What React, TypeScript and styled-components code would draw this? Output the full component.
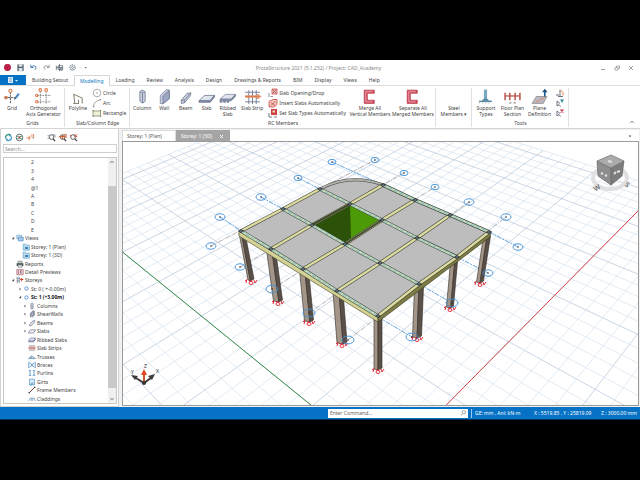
import React from "react";
import styled, { createGlobalStyle } from "styled-components";

const Global = createGlobalStyle`
  * { box-sizing: border-box; }
  html, body { margin: 0; background: #000; }
  body, button, input { font-family: "Noto Sans", "Open Sans", sans-serif; font-size: 5px; line-height: 6px; color: #444; }
  button { border: 0; margin: 0; padding: 0; background: none; cursor: pointer; }
  ul { list-style: none; margin: 0; padding: 0; }
  svg { display: block; flex: none; }
`;

/* ---------- shell ---------- */
const Page = styled.div`
  min-height: 100vh;
  padding: 60px 0 61px;
  display: flex;
  background: #000;
`;
const Screen = styled.div`
  flex: 1;
  min-width: 0;
  display: flex;
  flex-direction: column;
  background: #fff;
`;
const TitleBar = styled.header`
  display: grid;
  grid-template-columns: 1fr auto 1fr;
  align-items: center;
  height: 15px;
  padding: 0 4px 0 1px;
`;
const QuickBar = styled.div`
  display: flex;
  align-items: center;
`;
const QuickButton = styled.button`
  width: 13px;
  height: 12px;
  display: grid;
  place-items: center;
`;
const Title = styled.h1`
  margin: 0;
  font-size: 5px;
  font-weight: 400;
  color: #8a8a8a;
  white-space: pre;
`;
const WindowButtons = styled.div`
  display: flex;
  justify-content: flex-end;
  gap: 4px;
`;
const WindowButton = styled.button`
  width: 10px;
  height: 10px;
  display: grid;
  place-items: center;
`;

/* ---------- ribbon ---------- */
const TabRow = styled.nav`
  display: flex;
  height: 11px;
  border-bottom: 1px solid #dcdcdc;
`;
const FileTab = styled.button`
  width: 26px;
  height: 10px;
  background: #0572c6;
  display: grid;
  place-items: center;
`;
const RibbonTab = styled.button<{ $active?: boolean }>`
  height: ${(p) => (p.$active ? 11 : 10)}px;
  padding: 0 ${(p) => (p.$active ? 5 : 6)}px;
  border: ${(p) => (p.$active ? "1px solid #d6d6d6" : "0")};
  border-bottom: 0;
  background: #fff;
  color: ${(p) => (p.$active ? "#0a78c0" : "#444")};
  white-space: nowrap;
`;
const Ribbon = styled.div`
  display: flex;
  height: 43px;
  border-bottom: 1px solid #d4d4d4;
`;
const Group = styled.section`
  display: flex;
  flex-direction: column;
  justify-content: space-between;
  margin: 2px 0 1px;
  border-right: 1px solid #e0e0e0;
  padding-left: 1px;
`;
const GroupBody = styled.div`
  display: flex;
`;
const GroupLabel = styled.h2`
  margin: 0;
  font-size: 5px;
  font-weight: 400;
  line-height: 7px;
  height: 7px;
  text-align: center;
`;
const Tool = styled.button<{ $width: number }>`
  width: ${(p) => p.$width}px;
  display: flex;
  flex-direction: column;
  align-items: center;
  text-align: center;
  white-space: pre;
`;
const ToolList = styled.div`
  display: flex;
  flex-direction: column;
  padding-left: 2px;
`;
const SmallTool = styled.button`
  display: flex;
  align-items: center;
  gap: 1px;
  height: 10px;
  padding-right: 3px;
  white-space: nowrap;
`;
const RibbonEnd = styled.div`
  flex: 1;
  display: flex;
  justify-content: flex-end;
  align-items: flex-end;
  padding: 2px 4px;
`;

/* ---------- workspace ---------- */
const Workspace = styled.main`
  flex: 1;
  min-height: 0;
  display: flex;
  background: #f1f1f1;
`;
const SidePanel = styled.aside`
  width: 119px;
  display: flex;
  flex-direction: column;
  border: 1px solid #d2d2d2;
  border-top: 0;
  padding: 1px 1px 2px 2px;
  background: #fff;
`;
const PanelTools = styled.div`
  display: flex;
  height: 14px;
  align-items: center;
`;
const PanelButton = styled.button<{ $gap?: boolean }>`
  width: 11px;
  height: 11px;
  margin-left: ${(p) => (p.$gap ? 10 : 0)}px;
  display: grid;
  place-items: center;
`;
const TreeSearch = styled.input`
  width: 100%;
  height: 9px;
  border: 1px solid #cfcfcf;
  padding: 0 1px;
  margin-bottom: 4px;
  &::placeholder { color: #8c8c8c; }
`;
const TreeBox = styled.div`
  flex: 1;
  display: flex;
  border: 1px solid #c8c8c8;
`;
const Tree = styled.ul`
  flex: 1;
  display: grid;
  grid-auto-rows: 1fr;
`;
const TreeRow = styled.li<{ $pad: number; $bold?: boolean }>`
  display: flex;
  align-items: center;
  gap: 1px;
  min-height: 8px;
  padding-left: ${(p) => p.$pad}px;
  font-weight: ${(p) => (p.$bold ? 700 : 400)};
  color: ${(p) => (p.$bold ? "#111" : "#444")};
  white-space: nowrap;
`;
const Expander = styled.button`
  width: 5px;
  height: 6px;
  display: grid;
  place-items: center;
`;
const ScrollBar = styled.div`
  width: 8px;
  display: grid;
  grid-template-rows: 8px 20fr 201fr 15px;
  justify-items: center;
  background: #f0f0f0;
`;
const ScrollThumb = styled.div`
  grid-row: 3;
  width: 100%;
  background: #c9c9c9;
`;
const ScrollArrow = styled.button<{ $end?: boolean }>`
  grid-row: ${(p) => (p.$end ? 4 : 1)};
  align-self: ${(p) => (p.$end ? "end" : "center")};
  height: 8px;
  display: grid;
  place-items: center;
`;
const DocArea = styled.div`
  flex: 1;
  min-width: 0;
  display: flex;
  flex-direction: column;
  padding: 1px 1px 1px 3px;
`;
const DocTabs = styled.div`
  display: flex;
  height: 11px;
  padding-right: 6px;
  background: #fff;
`;
const DocTab = styled.button<{ $active?: boolean }>`
  width: 54px;
  padding: 0 4px;
  display: flex;
  align-items: center;
  justify-content: space-between;
  border: 1px solid ${(p) => (p.$active ? "#a5a5a5" : "#dadada")};
  border-bottom: 0;
  background: ${(p) => (p.$active ? "#a5a5a5" : "#fff")};
  color: ${(p) => (p.$active ? "#fff" : "#555")};
`;
const DocMenu = styled.button`
  margin-left: auto;
`;
const Viewport = styled.div`
  flex: 1;
  min-height: 0;
  display: grid;
  border: 1px solid #9a9a9a;
  background: #fff;
  svg { width: 100%; height: 100%; min-height: 0; }
`;
const StatusBar = styled.footer`
  height: 13px;
  display: flex;
  align-items: center;
  justify-content: flex-end;
  padding-right: 3px;
  background: #0572c6;
  color: #fff;
  border-bottom: 1px solid #07375e;
  white-space: pre;
`;
const Command = styled.label`
  display: flex;
  align-items: center;
  width: 22%;
  height: 9px;
  padding-right: 1px;
  background: #fff;
  margin-right: 3px;
`;
const CommandInput = styled.input`
  flex: 1;
  min-width: 0;
  height: 9px;
  border: 0;
  padding: 0 2px;
  background: none;
  &::placeholder { color: #666; }
`;
const StatusText = styled.span<{ $width: number }>`
  width: ${(p) => p.$width}px;
  padding-left: 3px;
`;
const StatusFirst = styled(StatusText)`
  border-left: 1px solid #9cc8ea;
  line-height: 9px;
`;

/* ---------- icons ---------- */
const RED = "#d2464a";
const ORANGE = "#e07a4a";
const GRAY = "#6b7280";
const STEEL = "#c9cfe0";

const art: Record<string, React.ReactNode> = {
  grid: (
    <g fill="none">
      <path d="M6 4v11M1 9h10" stroke="#555" strokeWidth=".9" strokeDasharray="2 .7" />
      <circle cx="6" cy="2.600" r="1.500" stroke={ORANGE} /><circle cx="1.900" cy="9" r="1.300" stroke={ORANGE} />
      <path d="M10 9l3.200-4.400 1.600 1.200L12 9.600z" fill="#4b8bc4" /><path d="M9.400 11l.7-2 1.800.8z" fill="#355" />
    </g>
  ),
  ortho: (
    <g fill="none">
      <path d="M5 3v12M10.500 3v12M2 7h13M2 13h13" stroke="#777" strokeWidth=".8" strokeDasharray="1.600 .9" />
      <g stroke={ORANGE}><circle cx="5" cy="1.900" r="1.300" /><circle cx="10.500" cy="1.900" r="1.300" /><circle cx="1.700" cy="7" r="1.200" /><circle cx="1.700" cy="13" r="1.200" /></g>
    </g>
  ),
  polyline: <path d="M4.500 14.500L3.500 6l8 3.500v5M3 14.500h5V11" fill="none" stroke="#8b8877" strokeWidth="1" />,
  column: <g stroke="#68718a" strokeWidth=".7"><path d="M5.500 3.500q2-3 5 0v9q-2 3-5 0z" fill={STEEL} /><path d="M8 4v10" fill="none" /><path d="M5.500 3.500q2 1.500 5 0" fill="#eef" /></g>,
  wall: <g stroke="#68718a" strokeWidth=".6"><path d="M4 7l6-5.500 2.500.6v8L6.500 15 4 14.500z" fill={STEEL} /><path d="M6.500 7.500L12.500 2v8L6.500 15z" fill="#9ba6c2" /></g>,
  beam: <g stroke="#68718a" strokeWidth=".7"><path d="M4 11.500L9.500 5l3.500-.5-.5 3L7 14l-3 .5z" fill={STEEL} /><path d="M7 11.500L12.500 5M4 11.500h3V14" fill="none" /></g>,
  slab: <g stroke="#68718a" strokeWidth=".7"><path d="M1 12l5-5h9.500l-4 5z" fill="#dfe3ef" /><path d="M1 12v1.500h10.500L15.500 8.500V7l-4 5z" fill="#8791ad" /></g>,
  ribbed: <g stroke="#68718a" strokeWidth=".6"><path d="M1 10.500L6 6h9.500l-4 4.500z" fill="#dfe3ef" /><path d="M1 10.500v3h1.800v-1.500h1.500v1.500h1.800v-1.500h1.500v1.500h1.800v-1.500H11.500L15.500 8V6l-4 4.500z" fill="#8791ad" /></g>,
  strip: <g fill="none"><path d="M1 4h14M1 13h14M4.500 2v13M8 2v13M11.500 2v13" stroke="#777f99" strokeWidth=".9" /><path d="M1 8h13" stroke={ORANGE} strokeWidth="2" /><path d="M12.500 5.800L15.500 8l-3 2.200" stroke={ORANGE} /></g>,
  merge: <g><path d="M3 2h9.500v3H6v6.500h6.500v3H3z" fill="#d14a5c" stroke="#b33245" strokeWidth=".6" /><path d="M11 3.500H4.500v9.500H11" fill="none" stroke="#f4cdd2" strokeWidth=".6" /></g>,
  blank: null,
  support: <g><path d="M6.500 1.500h3v9h-3z" fill="#76a9c4" /><path d="M4.500 12l2-2h3l2 2z" fill="#4c7f9d" /><path d="M2 12.500h12" stroke="#4c7f9d" strokeWidth="1.200" /><path d="M2 14.500l1-1.500M5 14.500l1-1.500M8 14.500l1-1.500M11 14.500l1-1.500" stroke="#7a8b95" strokeWidth=".6" /></g>,
  floor: <g fill="none" stroke="#b5483c"><path d="M1 4.500v7M5.500 4.500v7M10.500 4.500v7M15 4.500v7" strokeWidth="1.300" /><path d="M1 7.500h14" strokeWidth="1.100" /><path d="M5 14h2M9 14h2" stroke="#888" /></g>,
  plane: <g><path d="M1 14.500L5 8h10l-3.500 6.500z" fill="#bdb9c4" stroke="#777" strokeWidth=".6" /><path d="M4 14l10-6" stroke={ORANGE} strokeWidth=".6" /><path d="M13 8V3" stroke="#174f86" strokeWidth="1.400" /><path d="M10.400 4L13 .8 15.600 4z" fill="#174f86" /></g>,
  /* ten-unit icons */
  circle: <g fill="none"><circle cx="5" cy="5" r="3.800" stroke="#999" strokeWidth=".8" /><circle cx="5" cy="5" r=".7" fill="#888" /></g>,
  arc: <g fill="none"><path d="M1.500 8.500Q2 2.500 8.500 2" stroke="#a09c88" strokeWidth=".9" /><path d="M.8 8.800h1.500M8 1.500h1" stroke="#777" /></g>,
  rect: <g><path d="M1 3h7.500v5H1z" fill="#eef0d8" stroke="#96957e" strokeWidth=".9" /><path d="M.5 2.500h1.200M.5 8.300h1.200M8 2.500h1.200M8 8.300h1.200" stroke="#6d7a55" /></g>,
  opening: <g fill="none"><path d="M4 1h5v5H4z" fill="#f0c9c4" stroke={RED} strokeWidth=".8" /><path d="M4.500 1.500l4 4m0-4l-4 4" stroke="#8c3c3c" strokeWidth=".7" /><path d="M1 5v4M2.500 8.500H5" stroke="#778" strokeWidth=".8" /></g>,
  insert: <g><path d="M1 3.500L5 1.500h4v5L6 9H1z" fill="#f3c8bd" stroke={RED} strokeWidth=".8" /><path d="M3 7.500L7.500 3M3 4.500l4 3" stroke="#b44" strokeWidth=".8" /></g>,
  types: <g><path d="M3 1h6v6H3z" fill="#cf3f3f" /><path d="M4.500 2.500h2.500v2H4.500z" fill="#f6d1c6" /><path d="M1 5v4h3M6 9h3" fill="none" stroke="#667" strokeWidth=".9" /></g>,
  t1: <g fill="none"><path d="M1 7h3M5 8V2M3 8.500h5" stroke={GRAY} /><path d="M5 1.500l3 3v3" stroke={ORANGE} /></g>,
  t2: <g fill="none"><path d="M2 3v5l2-1.500 1.500 2M2 3l3 2.500" stroke={GRAY} /><path d="M5 1.500h4L7.200 4.500V6L6.500 4z" fill="#2f8f9f" /></g>,
  t3: <g fill="none"><path d="M2 3v5l2-1.500 1.500 2M2 3l3 2.500" stroke={GRAY} /><path d="M5.500 1.500l3 3m0-3l-3 3" stroke="#c22f4b" strokeWidth="1.200" /></g>,
  logo: <g><circle cx="5" cy="5" r="3.800" fill="#b5123c" /><circle cx="5" cy="5" r="2" fill="none" stroke="#e67b95" strokeWidth=".6" strokeDasharray="1 .6" /></g>,
  save: <g><path d="M1.500 1.500h7v7.500h-7z" fill="#53616f" /><path d="M3 1.500h4v2.500H3z" fill="#e8edf1" /><path d="M3 5.500h4.200V9H3z" fill="#d8e0e6" /></g>,
  undo: <path d="M2 2v3h3M2.200 4.800Q5 1.500 7.500 4q1 2-1 3.500" fill="none" stroke="#3c76aa" />,
  redo: <path d="M8 2v3H5M7.800 4.800Q5 1.500 2.500 4q-1 2 1 3.500" fill="none" stroke="#8a949c" />,
  fit: <g fill="none" stroke="#66717c"><path d="M3.500 3h5v4h-5zM1.500 3v5M5 1v8M1.500 5h7" strokeWidth=".9" /><circle cx="7" cy="7" r="1.300" /></g>,
  gear: <g fill="none" stroke="#7f8c98"><circle cx="5" cy="5" r="2.900" strokeWidth="1.300" strokeDasharray="1.500 .6" /><circle cx="5" cy="5" r="1" /></g>,
  more: <path d="M4 4.500h2.400L5.200 6z" fill="#666" />,
  refresh: <g fill="none" strokeWidth="1.400"><path d="M1.800 5.500A3.200 3.200 0 0 1 7.500 3" stroke="#2f9a8a" /><path d="M8.200 4.500A3.200 3.200 0 0 1 2.500 7" stroke="#3aa0cf" /><path d="M6.500 1v2.700h2.200M3.500 9V6.400H1.300" stroke="#2c8ab0" strokeWidth=".8" /></g>,
  globe: <g fill="none"><circle cx="5" cy="5" r="3.700" stroke="#56646a" strokeWidth="1" /><path d="M1.500 3.800h7M1.500 6.300h7" stroke="#3b8f6b" strokeWidth=".8" /><path d="M3.800 4h2.500v2H3.800z" fill="#c65b4a" /></g>,
  axes: <g fill="none"><path d="M.5 5.500h5M3.500 3v5M6.500 1.500v3M8.500 1v4" stroke={ORANGE} /><path d="M7 5.500h2" stroke="#777" /></g>,
  find: <g fill="none"><circle cx="5" cy="4.500" r="2.600" stroke="#555" /><path d="M6.800 6.500L9 9" stroke="#333" strokeWidth="1.300" /><path d="M.5 3h3M.5 6h2M6 2h3v3" stroke="#789" strokeWidth=".8" /></g>,
  findUp: <g fill="none"><circle cx="5" cy="4.500" r="2.600" stroke="#555" /><path d="M6.800 6.500L9 9" stroke="#333" strokeWidth="1.300" /><path d="M5 2v5M1 4h7M7 1.500h2v4" stroke="#d4562d" strokeWidth="1.100" /></g>,
  findX: <g fill="none"><circle cx="4.500" cy="4.500" r="2.600" stroke="#555" /><path d="M6.500 6.500L9 9" stroke="#333" strokeWidth="1.300" /><path d="M6 1.500l3 3m0-3l-3 3M1 3h2" stroke="#cf3f35" /></g>,
  views: <g><path d="M1 1.500h6v4.500H1z" fill="#cfe4f5" stroke="#5d9ccb" strokeWidth=".8" /><path d="M3 4h6v4.500H3z" fill="#a9cdea" stroke="#3f83b8" strokeWidth=".8" /></g>,
  folder: <g><path d="M1.500 1.500h3l.8 1.200h4V9H1.500z" fill="#b9d9ee" stroke="#5fa0cc" strokeWidth=".8" /><path d="M4 5h3.500v2.500H4z" fill="#3f7da8" /></g>,
  printer: <g><path d="M2.500 1.500h5V4h-5z" fill="#e9ecea" stroke="#556" strokeWidth=".7" /><path d="M.8 4h8.400v3.500H.8z" fill="#4c5a55" /><path d="M2.500 6h5v3h-5z" fill="#dfe7e2" stroke="#556" strokeWidth=".6" /></g>,
  detail: <g><path d="M1 2h8v6.500H1z" fill="#f0dfe2" stroke="#9b5560" strokeWidth=".8" /><path d="M3 3v4.500M5 3l2 4M7 3L5 7" stroke="#8d4450" strokeWidth=".8" /></g>,
  storeys: <g fill="none"><path d="M1.500 1v8M4 1v8M1 3h4M1 6h4" stroke="#6d7688" strokeWidth=".9" /><path d="M7 2.500v4M5 4.500h4.200" stroke="#d4472f" strokeWidth="1.300" /></g>,
  dot: <circle cx="5" cy="5" r="2.400" fill="#fff" stroke="#4a86d2" strokeWidth="1.200" />,
  cColumn: <path d="M3.500 2q1.500-1.500 3 0v6q-1.500 1.500-3 0zM5 3v6" fill="#dde0e8" stroke="#7a8296" strokeWidth=".8" />,
  cWall: <path d="M3 4l3.500-3v5L3 9zM5 9l3-2.500v-5L6.500 1" fill="#9aa1b5" stroke="#6c7388" strokeWidth=".8" />,
  cBeam: <path d="M2 7l4.500-5h2L8 4 4 8.500H2z" fill="#e1e4ec" stroke="#737a8f" strokeWidth=".9" />,
  cSlab: <path d="M.5 7.500l2.500-4h6.500l-2.500 4z" fill="#eff0f5" stroke="#737a8f" strokeWidth=".9" />,
  cRibbed: <g><path d="M.5 6l2.500-3.500h6.500L7 6z" fill="#dfe1f0" stroke="#6b6f9e" strokeWidth=".8" /><path d="M.5 7.200H7l2.500-3.500" fill="none" stroke="#6b6f9e" strokeWidth="1.200" /></g>,
  cStrip: <g fill="none"><path d="M2.500 1v8M5 1v8M7.500 1v8M1 2.500h8M1 7.500h8" stroke="#9a8b90" strokeWidth=".7" /><path d="M.5 5h9" stroke="#cf4a45" strokeWidth="1.300" /></g>,
  cTruss: <path d="M.5 7l4-3.500L9.500 7zM3 7V5M4.500 7V4M6.500 7V5" fill="none" stroke="#5b8fb8" strokeWidth=".9" />,
  cBrace: <path d="M1 1v8M9 1v8M2.500 2l5 6M7.500 2l-5 6" fill="none" stroke="#3f83c4" />,
  cPurlin: <path d="M1 2h3M2.500 2v6M1 8h3M6 2h3M7.500 2v6M6 8h3" fill="none" stroke="#3f83c4" strokeWidth=".9" />,
  cGirt: <path d="M2 1.500h6v7H2zM2 8.500h2.500V6H6v2.500" fill="#e3f1fa" stroke="#4b93c4" strokeWidth=".9" />,
  cFrame: <g><path d="M1.500 8.500l7-7" stroke="#7a3040" strokeWidth="1.200" /><circle cx="1.500" cy="8.500" r="1" fill="#333" /><circle cx="8.500" cy="1.500" r="1" fill="#333" /></g>,
  cClad: <path d="M.5 7.500L3 4h5l1.500 3.500M4 7.500V4M6 7.500V4" fill="none" stroke="#5b8fb8" strokeWidth=".9" />,
  up: <path d="M3 6l2-2 2 2" fill="none" stroke="#444" />,
  down: <path d="M3 4l2 2 2-2" fill="none" stroke="#444" />,
  menu: <path d="M3 4h4L5 7z" fill="#444" />,
  min: <path d="M3 6.500h4" stroke="#888" strokeWidth=".8" />,
  max: <path d="M3 4.500h3v2.500H3zM4.500 4.500V3h3v2.500H6" fill="none" stroke="#999" strokeWidth=".8" />,
  close: <path d="M3 3l4 4m0-4L3 7" stroke="#888" strokeWidth=".8" />,
  closeTab: <path d="M3 3l4 4m0-4L3 7" stroke="#fff" strokeWidth="1.400" />,
  lens: <g fill="none" stroke="#777" strokeWidth=".8"><circle cx="6" cy="4" r="2" /><path d="M4.500 5.500L2.500 8" /></g>,
  closed: <path d="M4 3l3 2.200L4 7.500z" fill="#777" />,
  open: <path d="M7 3v4H3z" fill="#444" />,
};

const Icon = ({ name, size = 10, box = 10 }: { name: string; size?: number; box?: number }) => (
  <svg width={size} height={size} viewBox={`0 0 ${box} ${box}`} aria-hidden="true">{art[name]}</svg>
);
const Big = ({ name, label, width }: { name: string; label: string; width: number }) => (
  <Tool $width={width}>
    <Icon name={name} size={17} box={16} />
    {label}
  </Tool>
);
const Small = ({ name, label }: { name: string; label: string }) => (
  <SmallTool aria-label={label || name}>
    <Icon name={name} />
    {label}
  </SmallTool>
);

/* ---------- tree data ---------- */
type Row = { label: string; pad: number; icon?: string; state?: "open" | "closed"; bold?: boolean };
const rows: Row[] = [
  ...["2", "3", "4", "@1", "A", "B", "C", "D", "E"].map((label) => ({ label, pad: 27 })),
  { label: "Views", pad: 6, icon: "views", state: "open" },
  { label: "Storey: 1 (Plan)", pad: 18, icon: "folder" },
  { label: "Storey: 1 (3D)", pad: 18, icon: "folder" },
  { label: "Reports", pad: 12, icon: "printer" },
  { label: "Detail Previews", pad: 12, icon: "detail" },
  { label: "Storeys", pad: 6, icon: "storeys", state: "open" },
  { label: "St: 0 ( +-0.00m)", pad: 13, icon: "dot", state: "closed" },
  { label: "St: 1 (+3.00m)", pad: 13, icon: "dot", state: "open", bold: true },
  { label: "Columns", pad: 18, icon: "cColumn", state: "closed" },
  { label: "ShearWalls", pad: 18, icon: "cWall", state: "closed" },
  { label: "Beams", pad: 18, icon: "cBeam", state: "closed" },
  { label: "Slabs", pad: 18, icon: "cSlab", state: "closed" },
  { label: "Ribbed Slabs", pad: 24, icon: "cRibbed" },
  { label: "Slab Strips", pad: 24, icon: "cStrip" },
  { label: "Trusses", pad: 24, icon: "cTruss" },
  { label: "Braces", pad: 24, icon: "cBrace" },
  { label: "Purlins", pad: 24, icon: "cPurlin" },
  { label: "Girts", pad: 24, icon: "cGirt" },
  { label: "Frame Members", pad: 24, icon: "cFrame" },
  { label: "Claddings", pad: 24, icon: "cClad" },
];

/* ---------- 3D scene ---------- */
type Pt = [number, number];
const ORIGIN: Pt = [386, 466];
const VANISH_A: Pt = [1057, -213];
const VANISH_B: Pt = [-348, -130];
const STEP = 0.112;
const project = (a: number, b: number): Pt => {
  const w = 1 + a * STEP + b * STEP;
  return [0, 1].map((i) => (ORIGIN[i] + a * STEP * VANISH_A[i] + b * STEP * VANISH_B[i]) / w) as Pt;
};
const seg = (p: Pt, q: Pt) => `M${p[0].toFixed(1)} ${p[1].toFixed(1)}L${q[0].toFixed(1)} ${q[1].toFixed(1)}`;
const MIN = -15;
const MAX_A = 31;
const MAX_B = 36;
const minor: string[] = [];
const major: string[] = [];
for (let i = MIN; i <= MAX_A; i++) (i % 5 ? minor : major).push(seg(project(i / 5, MIN / 5), project(i / 5, MAX_B / 5)));
for (let i = MIN; i <= MAX_B; i++) (i % 5 ? minor : major).push(seg(project(MIN / 5, i / 5), project(MAX_A / 5, i / 5)));

const nodes: Pt[][] = [
  [[241, 231], [271, 249], [303, 269], [337, 291], [378, 316]],
  [[283, 209], [312, 225], [345, 244], [380, 263], [419, 284]],
  [[320, 189], [350, 204], [382, 220], [417, 238], [457, 257]],
  [[383, 185], [415, 200], [450, 215], [489, 232]],
];
const line = (pts: Pt[]) => "M" + pts.map((p) => p.join(" ")).join("L");
const alongB = nodes.map(line);
const alongA = [
  line([[241, 231], [283, 209], [320, 189]]),
  line([[271, 249], [312, 225], [350, 204], [383, 185]]),
  line([[303, 269], [345, 244], [382, 220], [415, 200]]),
  line([[337, 291], [380, 263], [417, 238], [450, 215]]),
  line([[378, 316], [419, 284], [457, 257], [489, 232]]),
];
const columns: number[][] = [
  /* top x, top y, base x, base y, width, share of the width that is lit */
  [242, 233, 251, 280, 6, 0.4],
  [271, 250, 278, 301, 9, 0.6],
  [304, 270, 309, 321, 9, 0.6],
  [338, 292, 342, 343, 10, 0.6],
  [487, 236, 480, 282, 7, 0.5],
  [454, 262, 450, 307, 7, 0.6],
  [419, 287, 417, 337, 9, 0.5],
  [378, 317, 378, 369, 8, 0.5],
];
const bubbles: [number, number, number][] = [
  [332, 162, 4], [298, 178, 4], [375, 160, 4], [404, 173, 4], [435, 187, 4], [469, 202, 5], [506, 217, 5],
  [261, 197, 5], [220, 217, 5], [211, 246, 5], [240, 267, 5], [272, 289, 6], [309, 313, 6], [348, 340, 6],
  [412, 337, 6], [452, 303, 6], [488, 273, 5], [518, 247, 5],
];

const Scene = () => (
  <svg viewBox="123 142 515 263" preserveAspectRatio="xMidYMid slice" role="img" aria-label="Storey 1 structural model">
    <path d={minor.join("")} stroke="#d6e3ef" strokeWidth=".7" fill="none" />
    <path d={major.join("")} stroke="#bccbdd" strokeWidth=".8" fill="none" />
    <path d={seg(project(0, -3), project(0, 7.2))} stroke="#3c8f4a" strokeWidth="1" />
    <path d={seg(project(-3, 0), project(6.2, 0))} stroke="#d8434c" strokeWidth="1" />

    <g stroke="#8d8d94" strokeWidth=".7" strokeDasharray="5 1 1 1" fill="none">
      <path d="M211 246L375 160M240 267L404 173M272 289L435 187M309 313L469 202M348 340L506 217" />
    </g>
    <g stroke="#3e8ed6" strokeWidth=".8" strokeDasharray="5 1 2 1" fill="none">
      <path d="M332 162L383 185M489 232L518 247M298 178L320 189M457 257L488 273M261 197L283 209M419 284L452 303M220 217L241 231M378 317L412 337" />
    </g>

    {columns.map(([tx, ty, bx, by, w, s]) => {
      const l = -w / 2;
      const m = l + w * s;
      const r = w / 2;
      return (
        <g key={tx} stroke="#2f2a27" strokeWidth=".6">
          <path d={`M${tx + l} ${ty}L${bx + l} ${by}L${bx + m} ${by + 1}L${tx + m} ${ty}z`} fill="#a39689" />
          <path d={`M${tx + m} ${ty}L${bx + m} ${by + 1}L${bx + r} ${by - 1}L${tx + r} ${ty}z`} fill="#5a5047" />
        </g>
      );
    })}
    {columns.map(([, , x, y]) => (
      <path key={x} transform={`translate(${x} ${y})`} d="M-6 0l2 2M-4-1l-1 4M-2 3a2 1.500 0 1 0 4 0a2 1.500 0 1 0-4 0M3 0l1 3l2-3M-2 1l3 0" fill="none" stroke="#e0202c" strokeWidth=".9" />
    ))}

    <path d="M239 231L378 316V322L239 236z" fill="#d3d193" stroke="#45452a" strokeWidth=".6" />
    <path d="M378 316L491 231L490 237L378 322z" fill="#7d7b45" stroke="#36361f" strokeWidth=".6" />
    <path d="M241 231L320 189Q350 173 383 185L489 232L378 316z" fill="#bdbdbd" />
    <path d="M320 189Q350 173 383 185" fill="none" stroke="#444" strokeWidth="3" />
    <path d="M320 189Q350 173 383 185" fill="none" stroke="#aeb0a8" strokeWidth="2" />

    <path d="M312 225L350 204L382 220L345 244z" fill="#2b5208" />
    <path d="M350 204L382 220L351 239z" fill="#4c9a05" />

    <g fill="none" strokeWidth="3.600" stroke="#44463a">{alongA.map((d) => <path key={d} d={d} />)}</g>
    <g fill="none" strokeWidth="2.400" stroke="#dcdca2">{alongA.map((d) => <path key={d} d={d} />)}</g>
    <g fill="none" strokeWidth="3.600" stroke="#3a4a4c">{alongB.map((d) => <path key={d} d={d} />)}</g>
    <g fill="none" strokeWidth="2.400" stroke="#d0dfb4">{alongB.map((d) => <path key={d} d={d} />)}</g>
    <g fill="none" strokeWidth="1.200" stroke="#8fc4c4" strokeDasharray="4 2">{alongB.map((d) => <path key={d} d={d} />)}</g>
    <path d="M312 225L350 204M345 244L382 220" stroke="#3f4a2a" strokeWidth="2" />
    {nodes.flat().map(([x, y]) => (
      <path key={`${x}-${y}`} d={`M${x - 2.5} ${y}L${x} ${y - 1.5}L${x + 2.5} ${y}L${x} ${y + 1.5}z`} fill="#6b7a82" stroke="#1d2226" strokeWidth=".7" />
    ))}

    {bubbles.map(([x, y, r]) => (
      <g key={`${x}-${y}`}>
        <ellipse cx={x} cy={y} rx={r} ry={r * 0.65} fill="none" stroke="#3e8ed6" strokeWidth=".9" />
        <path d={`M${x - 1} ${y}h2`} stroke="#234" strokeWidth=".9" />
      </g>
    ))}

    <g>
      <ellipse cx="610" cy="178" rx="17" ry="11" fill="none" stroke="#e0e0e2" strokeWidth="4" />
      <path d="M597 161L611 155L624 161L611 168z" fill="#ababab" />
      <path d="M597 161L611 168V185L598 176z" fill="#8e8e8e" />
      <path d="M611 168L624 161L622 176L611 185z" fill="#7c7c7c" />
      <path d="M597 161L611 155L624 161L611 168zM597 161L598 176L611 185L622 176L624 161M611 168V185" fill="none" stroke="#5c5c5c" strokeWidth=".6" />
      <path d="M601 173l2 1M605 175l2 1M614 174l2-2M617 172l3-1M608 161l4 1" stroke="#e2e2e2" strokeWidth="2" />
      <text x="593" y="190" fontSize="7" fontWeight="700" fill="#7d7d7d" transform="rotate(-35 597 187)">W</text>
      <text x="625" y="187" fontSize="7" fontWeight="700" fill="#7d7d7d" transform="rotate(35 627 185)">S</text>
    </g>

    <g>
      <path d="M144 383L136 378M144 383L151 378" stroke="#3e3a38" strokeWidth="2" />
      <path d="M131 375l7 1-3 4zM155 374l-7 2 4 4z" fill="#3e3a38" />
      <path d="M144 383V373" stroke="#c9552b" strokeWidth="2" />
      <path d="M141 375L144 369L147 375z" fill="#e4481c" />
      <circle cx="144" cy="383" r="2" fill="#333" />
      <text x="144" y="368" fontSize="5" fill="#333">Z</text>
      <text x="131" y="374" fontSize="5" fill="#333">Y</text>
      <text x="156" y="373" fontSize="5" fill="#333">X</text>
    </g>
  </svg>
);

const quick = ["logo", "save", "undo", "redo", "fit", "gear", "more"];
const tabs = ["Building Setout", "Modelling", "Loading", "Review", "Analysis", "Design", "Drawings & Reports", "BIM", "Display", "Views", "Help"];

export default function App() {
  return (
    <Page>
      <Global />
      <Screen>
        <TitleBar>
          <QuickBar>{quick.map((n) => <QuickButton key={n} aria-label={n}><Icon name={n} size={9} /></QuickButton>)}</QuickBar>
          <Title>ProtaStructure 2021 (5.1.252) / Project: CAD_Academy</Title>
          <WindowButtons>{["min", "max", "close"].map((n) => <WindowButton key={n} aria-label={n}><Icon name={n} /></WindowButton>)}</WindowButtons>
        </TitleBar>

        <TabRow>
          <FileTab aria-label="File">
            <svg width="12" height="8" viewBox="0 0 12 8"><path d="M1 1h5v6H1z" fill="#dcebf7" /><path d="M2 2.500h3M2 4h3M2 5.500h3" stroke="#5a9ad0" strokeWidth=".6" /><path d="M8 4h3L9.500 5.500z" fill="#fff" /></svg>
          </FileTab>
          {tabs.map((t) => <RibbonTab key={t} $active={t === "Modelling"}>{t}</RibbonTab>)}
        </TabRow>

        <Ribbon>
          <Group>
            <GroupBody>
              <Big name="grid" label="Grid" width={22} />
              <Big name="ortho" label={"Orthogonal\nAxis Generator"} width={41} />
            </GroupBody>
            <GroupLabel>Grids</GroupLabel>
          </Group>
          <Group>
            <GroupBody>
              <Big name="polyline" label="Polyline" width={24} />
              <ToolList>
                <Small name="circle" label="Circle" />
                <Small name="arc" label="Arc" />
                <Small name="rect" label="Rectangle" />
              </ToolList>
            </GroupBody>
            <GroupLabel>Slab/Column Edge</GroupLabel>
          </Group>
          <Group>
            <GroupBody>
              <Big name="column" label="Column" width={22} />
              <Big name="wall" label="Wall" width={22} />
              <Big name="beam" label="Beam" width={21} />
              <Big name="slab" label="Slab" width={21} />
              <Big name="ribbed" label={"Ribbed\nSlab"} width={21} />
              <Big name="strip" label="Slab Strip" width={28} />
              <ToolList>
                <Small name="opening" label="Slab Opening/Drop" />
                <Small name="insert" label="Insert Slabs Automatically" />
                <Small name="types" label="Set Slab Types Automatically" />
              </ToolList>
              <Big name="merge" label={"Merge All\nVertical Members"} width={42} />
              <Big name="merge" label={"Separate All\nMerged Members"} width={44} />
            </GroupBody>
            <GroupLabel>RC Members</GroupLabel>
          </Group>
          <Group>
            <GroupBody><Big name="blank" label={"Steel\nMembers ▾"} width={34} /></GroupBody>
          </Group>
          <Group>
            <GroupBody>
              <Big name="support" label={"Support\nTypes"} width={26} />
              <Big name="floor" label={"Floor Plan\nSection"} width={27} />
              <Big name="plane" label={"Plane\nDefinition"} width={27} />
              <ToolList>
                <Small name="t1" label="" />
                <Small name="t2" label="" />
                <Small name="t3" label="" />
              </ToolList>
            </GroupBody>
            <GroupLabel>Tools</GroupLabel>
          </Group>
          <RibbonEnd><button aria-label="Collapse ribbon"><Icon name="up" size={8} /></button></RibbonEnd>
        </Ribbon>

        <Workspace>
          <SidePanel>
            <PanelTools>
              {["refresh", "globe", "axes", "find", "findUp", "findX"].map((n) => (
                <PanelButton key={n} aria-label={n} $gap={n === "find"}><Icon name={n} size={9} /></PanelButton>
              ))}
            </PanelTools>
            <TreeSearch aria-label="Search tree" placeholder="Search..." />
            <TreeBox>
              <Tree>
                {rows.map((r) => (
                  <TreeRow key={r.label} $pad={r.pad} $bold={r.bold}>
                    {r.state && <Expander aria-label={`Toggle ${r.label}`}><Icon name={r.state} size={6} /></Expander>}
                    {r.icon && <Icon name={r.icon} size={r.icon === "dot" ? 7 : 8} />}
                    {r.label}
                  </TreeRow>
                ))}
              </Tree>
              <ScrollBar>
                <ScrollArrow aria-label="Scroll up"><Icon name="up" size={8} /></ScrollArrow>
                <ScrollThumb />
                <ScrollArrow $end aria-label="Scroll down"><Icon name="down" size={8} /></ScrollArrow>
              </ScrollBar>
            </TreeBox>
          </SidePanel>
          <DocArea>
            <DocTabs>
              <DocTab>Storey: 1 (Plan)</DocTab>
              <DocTab $active>Storey: 1 (3D)<Icon name="closeTab" size={7} /></DocTab>
              <DocMenu aria-label="Documents"><Icon name="menu" size={6} /></DocMenu>
            </DocTabs>
            <Viewport><Scene /></Viewport>
          </DocArea>
        </Workspace>

        <StatusBar>
          <Command>
            <CommandInput aria-label="Command" placeholder="Enter Command..." />
            <Icon name="lens" size={8} />
          </Command>
          <StatusFirst $width={60}>GE: mm , Ani: kN-m</StatusFirst>
          <StatusText $width={67}>X : 5519.85 , Y : 25819.09</StatusText>
          <StatusText $width={39}>Z : 3000.00 mm</StatusText>
        </StatusBar>
      </Screen>
    </Page>
  );
}
